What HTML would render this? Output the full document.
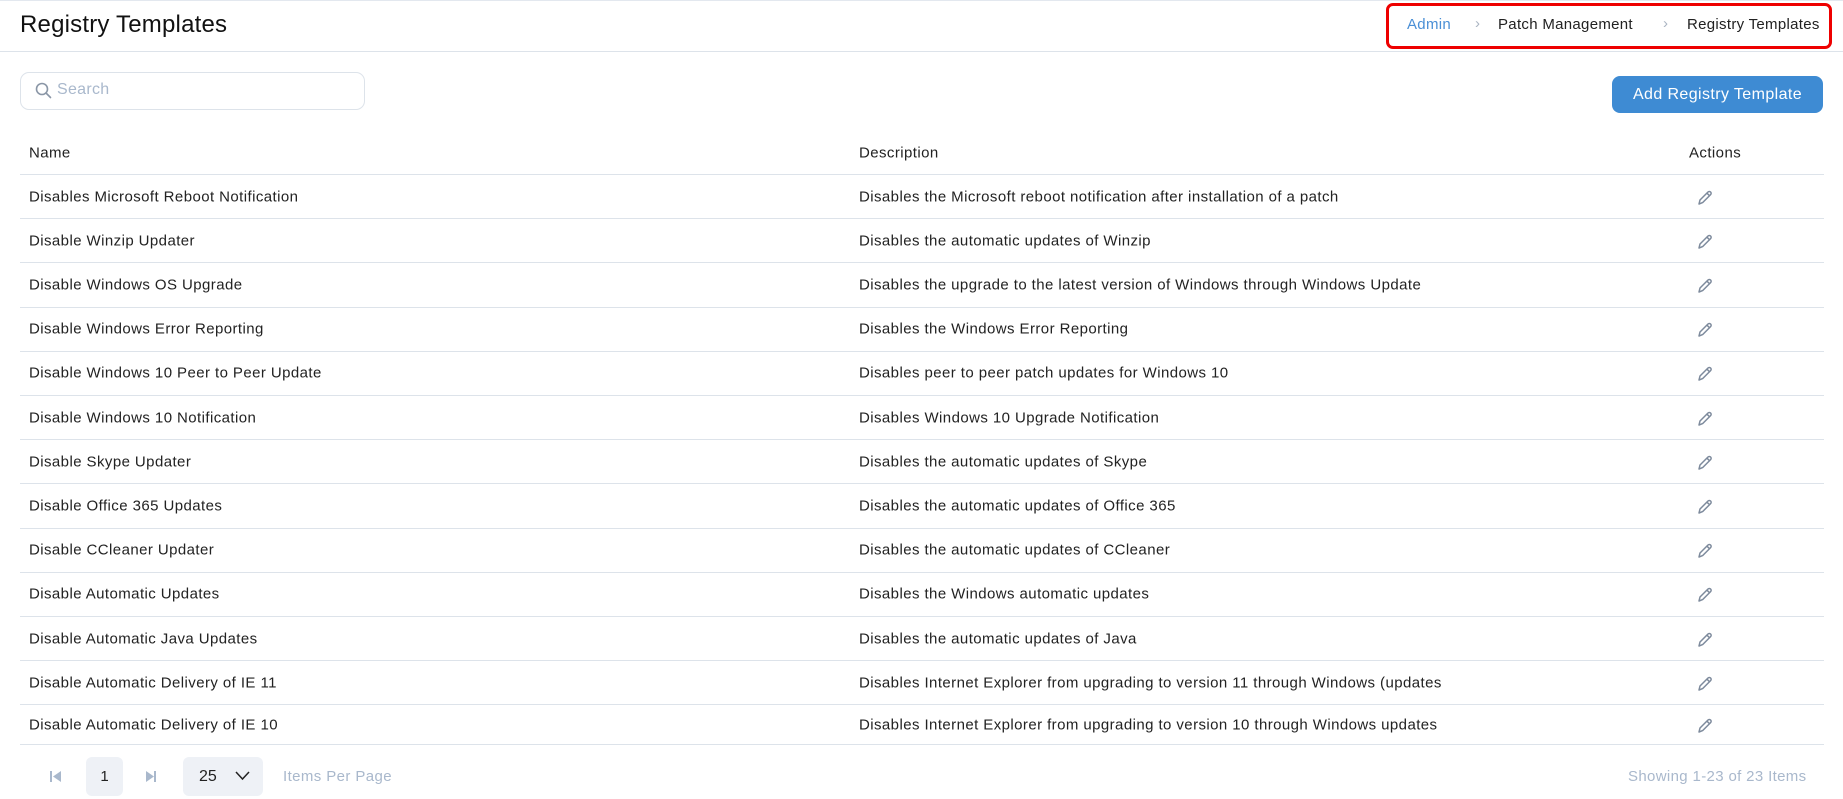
<!DOCTYPE html>
<html><head><meta charset="utf-8"><style>
*{margin:0;padding:0;box-sizing:border-box}
body{width:1843px;height:799px;background:#fff;font-family:"Liberation Sans",sans-serif;color:#222;position:relative;overflow:hidden;border-top:1px solid #e3e8ef}
.abs{position:absolute;white-space:nowrap}
.hdr{position:absolute;left:0;top:50px;width:1843px;height:1px;background:#dde3ea}
.title{left:20px;top:10px;font-size:24px;color:#111;letter-spacing:0.2px}
.bc{left:1386px;top:2px;width:446px;height:46px;border:3px solid #e00;border-radius:7px}
.bct{top:15px;font-size:15px;color:#222;letter-spacing:0.3px}
.chev{top:14px;font-size:15px;color:#aab4c2}
.search{left:20px;top:71px;width:345px;height:38px;border:1px solid #dde3ea;border-radius:9px}
.btn{left:1612px;top:75px;width:211px;height:37px;background:#3e8bd3;border-radius:8px;color:#fff;font-size:16px;text-align:center;line-height:37px;letter-spacing:0.4px}
.row{position:absolute;left:20px;width:1804px;border-bottom:1px solid #dde3ea;font-size:15px;letter-spacing:0.42px}
.row span{position:absolute;top:50%;transform:translateY(-50%)}
.c1{left:9px}.c2{left:839px}.c3{left:1669px}
.foot{font-size:15px}
</style></head><body>
<div class="hdr"></div>
<div class="abs title">Registry Templates</div>
<div class="abs bc"></div>
<div class="abs bct" style="left:1407px;color:#4a8fd6">Admin</div>
<div class="abs chev" style="left:1475px">›</div>
<div class="abs bct" style="left:1498px">Patch Management</div>
<div class="abs chev" style="left:1663px">›</div>
<div class="abs bct" style="left:1687px">Registry Templates</div>

<div class="abs search"></div>
<svg class="abs" style="left:35px;top:81px" width="17" height="17" viewBox="0 0 17 17"><circle cx="7" cy="7" r="5.5" fill="none" stroke="#8a96a6" stroke-width="1.6"/><path d="M11 11l4.5 4.5" stroke="#8a96a6" stroke-width="1.6" stroke-linecap="round"/></svg>
<div class="abs" style="left:57px;top:80px;font-size:16px;color:#a9b8cc;letter-spacing:0.3px">Search</div>
<div class="abs btn">Add Registry Template</div>

<div class="row" style="top:130px;height:44px"><span class="c1">Name</span><span class="c2">Description</span><span class="c3">Actions</span></div>
<div id="rows"></div>

<div class="abs" style="left:50px;top:770px;width:2px;height:11px;background:#a9b8cc"></div>
<svg class="abs" style="left:52px;top:770px" width="9" height="11"><path d="M9 0L1 5.5l8 5.5z" fill="#a9b8cc"/></svg>
<div class="abs" style="left:86px;top:756px;width:37px;height:39px;background:#eef1f6;border-radius:6px;text-align:center;line-height:39px;font-size:15px">1</div>
<svg class="abs" style="left:146px;top:770px" width="9" height="11"><path d="M0 0l8 5.5-8 5.5z" fill="#a9b8cc"/></svg>
<div class="abs" style="left:154px;top:770px;width:2px;height:11px;background:#a9b8cc"></div>
<div class="abs" style="left:183px;top:756px;width:80px;height:39px;background:#eef1f6;border-radius:6px"></div>
<div class="abs foot" style="left:199px;top:767px;font-size:16px">25</div>
<svg class="abs" style="left:235px;top:770px" width="15" height="10"><path d="M1 1l6.5 7 6.5-7" fill="none" stroke="#222" stroke-width="1.5"/></svg>
<div class="abs foot" style="left:283px;top:767px;color:#a9b8cc;font-size:15px;letter-spacing:0.4px">Items Per Page</div>
<div class="abs foot" style="left:1628px;top:767px;color:#a9b8cc;letter-spacing:0.35px">Showing 1-23 of 23 Items</div>

<script>
const d=[["Disables Microsoft Reboot Notification","Disables the Microsoft reboot notification after installation of a patch"],
["Disable Winzip Updater","Disables the automatic updates of Winzip"],
["Disable Windows OS Upgrade","Disables the upgrade to the latest version of Windows through Windows Update"],
["Disable Windows Error Reporting","Disables the Windows Error Reporting"],
["Disable Windows 10 Peer to Peer Update","Disables peer to peer patch updates for Windows 10"],
["Disable Windows 10 Notification","Disables Windows 10 Upgrade Notification"],
["Disable Skype Updater","Disables the automatic updates of Skype"],
["Disable Office 365 Updates","Disables the automatic updates of Office 365"],
["Disable CCleaner Updater","Disables the automatic updates of CCleaner"],
["Disable Automatic Updates","Disables the Windows automatic updates"],
["Disable Automatic Java Updates","Disables the automatic updates of Java"],
["Disable Automatic Delivery of IE 11","Disables Internet Explorer from upgrading to version 11 through Windows (updates"],
["Disable Automatic Delivery of IE 10","Disables Internet Explorer from upgrading to version 10 through Windows updates"]];
let h="",y=174;
const pen='<svg width="18" height="18" viewBox="0 0 18 18" style="display:block"><path d="M3 15l1-4 8-8a1.6 1.6 0 0 1 2.6 2.6l-8 8z M11 4.2l2.8 2.8" fill="none" stroke="#7d8a9c" stroke-width="1.5" stroke-linejoin="round"/></svg>';
d.forEach((r,i)=>{const hh=i==12?40:44.2;h+=`<div class="row" style="top:${y}px;height:${hh}px"><span class="c1">${r[0]}</span><span class="c2">${r[1]}</span><span style="left:1676px;top:calc(50% + 1px)">${pen}</span></div>`;y+=hh;});
document.getElementById("rows").innerHTML=h;
</script>
</body></html>
